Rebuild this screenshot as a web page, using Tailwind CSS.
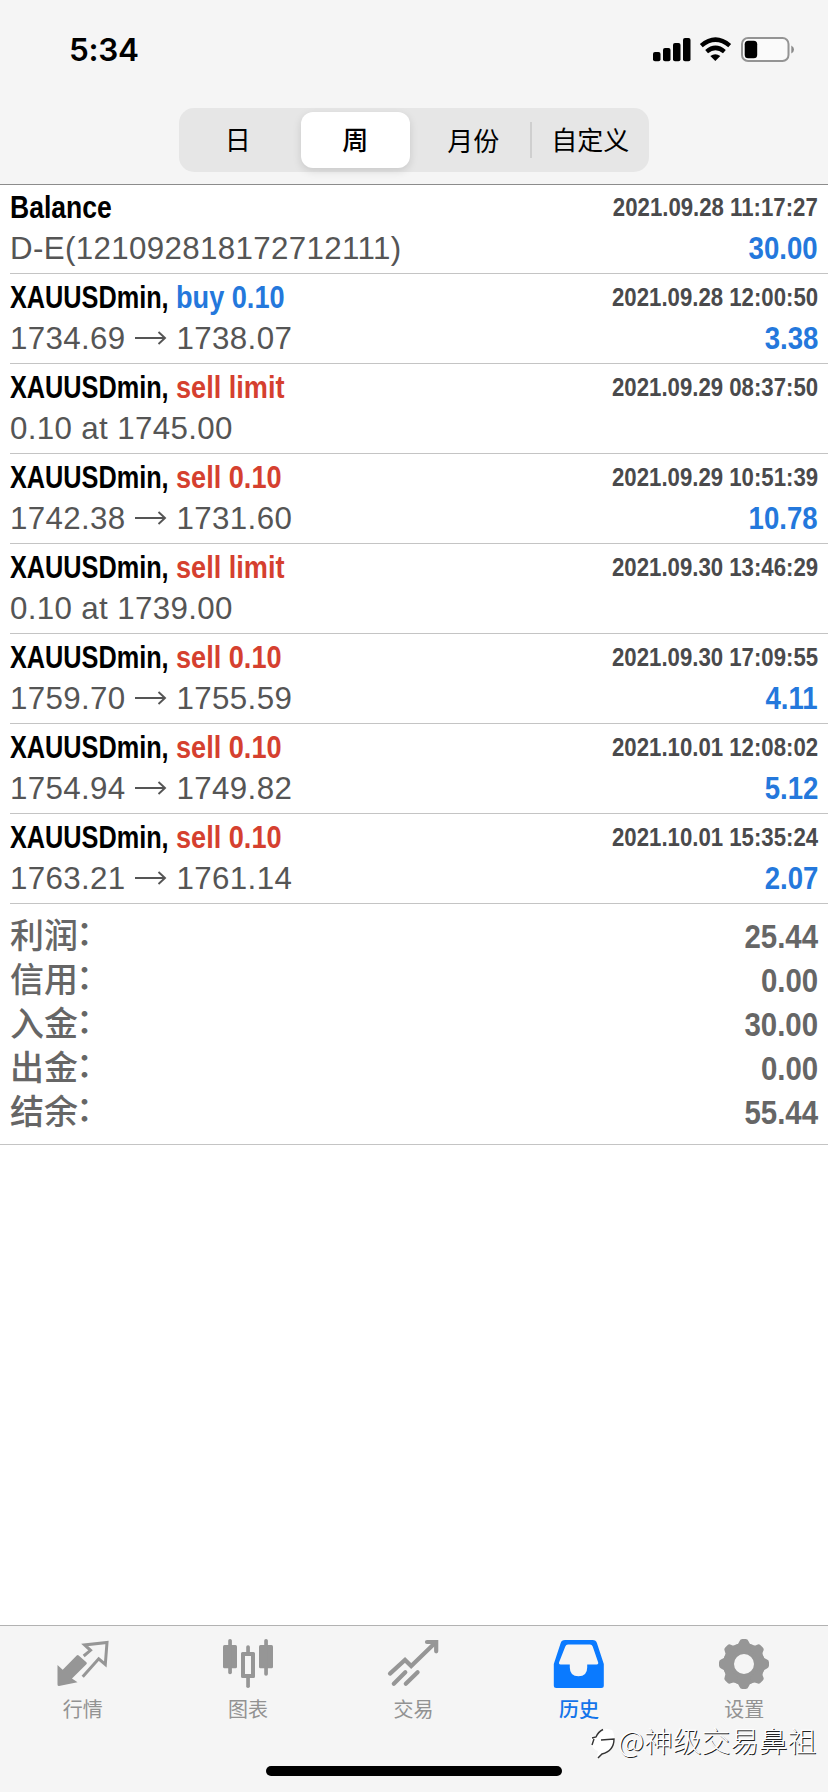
<!DOCTYPE html>
<html lang="zh-CN">
<head>
<meta charset="utf-8">
<title>历史</title>
<script src="https://cdn.jsdelivr.net/npm/@tailwindcss/browser@4"></script>
</head>
<body class="w-[828px] h-[1792px] overflow-hidden bg-white flex flex-col font-['Liberation_Sans','Noto_Sans_CJK_SC',sans-serif]">

<header class="h-[185px] shrink-0 bg-[#f5f5f5] border-b border-[#8c8c8c]">
  <div class="h-[108px] pl-[69px] pr-[34px] flex justify-between">
    <div class="mt-[30px] h-[40px] leading-[40px] text-[31.500px] tracking-[-0.300px] font-semibold font-['Inter',sans-serif] text-black">5:34</div>
    <svg class="mt-[34px]" width="142" height="32" viewBox="652 34 142 32">
      <g fill="#000">
        <rect x="653" y="52" width="7.5" height="9.3" rx="2"/>
        <rect x="663" y="48" width="7.5" height="13.3" rx="2"/>
        <rect x="673" y="43" width="7.5" height="18.3" rx="2"/>
        <rect x="683" y="38" width="7.5" height="23.3" rx="2"/>
        <path d="M715.3 61 l-5-5 q5-3.6 10 0z"/>
      </g>
      <g fill="none" stroke="#000" stroke-width="4.4">
        <path d="M701.3 45.6 Q715.5 33.6 729.700 45.600"/>
        <path d="M706.600 51.600 Q715.500 44.200 724.400 51.600"/>
      </g>
      <rect x="742" y="38" width="46.500" height="23" rx="6" fill="#fafafa" stroke="#949494" stroke-width="2"/>
      <rect x="744.700" y="40.800" width="12.500" height="17.400" rx="3.500" fill="#000"/>
      <path d="M791.300 45.500 q2.700 1.300 2.700 4 t-2.700 4z" fill="#8a8a8a"/>
    </svg>
  </div>
  <div class="mx-auto w-[470px] h-[64px] py-[4px] rounded-[15px] bg-[#e6e6e6] grid grid-cols-4 text-[26px] leading-[54px] text-center text-black font-['Noto_Sans_CJK_SC',sans-serif]">
    <div>日</div>
    <div class="mx-[4px] rounded-[12px] bg-white shadow-[0_3px_8px_rgba(0,0,0,0.13)] font-medium">周</div>
    <div class="flex items-center justify-between"><span class="flex-1 pl-[3px]">月份</span><i class="w-[2px] h-[36px] bg-[#cfcfcf]"></i></div>
    <div>自定义</div>
  </div>
</header>

<main class="flex-1">
  <div id="deals" class="pl-[10px]"></div>
  <div id="summary" class="h-[241px] pt-[10px] pl-[10px] pr-[10px] border-b border-[#c4c4c4] text-[#666]"></div>
</main>

<footer class="relative h-[167px] shrink-0 bg-[#f5f5f5] border-t border-[#b2b2b2]">
  <nav class="w-[827px] pt-[12px] grid grid-cols-5 text-center text-[20px] leading-[30px] text-[#929292] font-['Noto_Sans_CJK_SC',sans-serif]">
    <div class="flex flex-col items-center gap-[4px]">
      <svg width="52" height="52" viewBox="0 0 52 52"><path d="M.5 27l5.200 4.800 14-14.200q1-1 2 0l7.700 6.700q1 1 0 2L15 40.500l5.500 3.700L2 48q-1.500 0-1.500-1.500z" fill="#969696"/><path d="M26.700 18l6.800-5.700-5.900-5.400L50 4.400 48.300 26.500l-6.600-5.700-16 17.900" fill="none" stroke="#969696" stroke-width="3"/></svg>
      <span>行情</span>
    </div>
    <div class="flex flex-col items-center gap-[4px]">
      <svg width="52" height="52" viewBox="0 0 52 52" fill="#969696"><rect x="1" y="7" width="14" height="23.300" rx="1.500"/><rect x="6.200" y="1" width="3.700" height="35.300" rx="1.800"/><path fill-rule="evenodd" d="M20.500 14h11q1.500 0 1.500 1.500v23q0 1.500-1.500 1.500h-11q-1.500 0-1.500-1.500v-23q0-1.500 1.500-1.500zM23 18v18h6V18z"/><rect x="24.200" y="7.300" width="3.700" height="8" rx="1.800"/><rect x="24.200" y="38" width="3.700" height="12" rx="1.800"/><rect x="37" y="7" width="14" height="23.300" rx="1.500"/><rect x="42.200" y="1" width="3.700" height="36.700" rx="1.800"/></svg>
      <span>图表</span>
    </div>
    <div class="flex flex-col items-center gap-[4px]">
      <svg width="52" height="52" viewBox="0 0 52 52" fill="none" stroke="#969696" stroke-width="4.200" stroke-linecap="round"><path d="M3 35.600L18 21.900l6.200 6.200L48.500 4.600"/><path d="M40 4h9.200v9.300"/><path d="M6.800 45.700l11.500-11.500M18.800 45.700l11.800-11.500"/></svg>
      <span>交易</span>
    </div>
    <div class="flex flex-col items-center gap-[4px] text-[#1374ea] font-medium">
      <svg width="52" height="52" viewBox="0 0 52 52" fill="#0a7aff"><path fill-rule="evenodd" d="M12 2h27.500q3.500 0 4.500 3.200l6.800 20.800v21.500q0 2.500-2.500 2.500h-45Q.8 50 .8 47.500V26L7.600 5.200Q8.500 2 12 2zM15 6.500q-2 0-2.700 2L6 24.500q-.5 2 1.500 2h9.300v3q0 8.700 8.700 8.700t8.700-8.700v-3h9.500q2 0 1.500-2L39.700 8.500q-.7-2-2.700-2z"/></svg>
      <span>历史</span>
    </div>
    <div class="flex flex-col items-center gap-[4px]">
      <svg width="52" height="52" viewBox="0 0 52 52" fill="#969696"><circle cx="26" cy="26" r="15.500" fill="none" stroke="#969696" stroke-width="11"/><g id="t"><path d="M18 7q2.500-.5 3.600-4 .7-2 2.800-2h3.200q2.100 0 2.800 2 1.100 3.500 3.600 4l-3 5h-10z"/><path d="M18 7q2.500-.5 3.600-4 .7-2 2.800-2h3.200q2.100 0 2.800 2 1.100 3.500 3.600 4l-3 5h-10z" transform="rotate(90 26 26)"/><path d="M18 7q2.500-.5 3.600-4 .7-2 2.800-2h3.200q2.100 0 2.800 2 1.100 3.500 3.600 4l-3 5h-10z" transform="rotate(180 26 26)"/><path d="M18 7q2.500-.5 3.600-4 .7-2 2.800-2h3.200q2.100 0 2.800 2 1.100 3.500 3.600 4l-3 5h-10z" transform="rotate(270 26 26)"/></g><use href="#t" transform="rotate(45 26 26)"/></svg>
      <span>设置</span>
    </div>
  </nav>
  <div class="absolute left-[266px] top-[140px] w-[296px] h-[10px] rounded-full bg-black"></div>
  <div class="absolute left-[589px] top-[93px] flex items-center whitespace-nowrap text-[28.700px] leading-[40px] text-white font-light font-['Noto_Sans_CJK_SC',sans-serif] [text-shadow:1px_1px_0.500px_#222]">
    <svg class="mt-[7px]" width="29" height="34" viewBox="0 0 29 34" fill="none"><path d="M2 11l5-1q3-7 11-7l5 1q3 5 2 10-2 10-10 12l-3 3-4 2 1-6q-6-2-7-8z" fill="#fff"/><path d="M3 12l4-1q2-5 7-7.500M3 19l2-6M12 14l13-1q0 12-12 15l-4 4" stroke="#333" stroke-width="1.400"/></svg>
    <span>@神级交易鼻祖</span>
  </div>
</footer>

<script>
const blue = 'text-[#2478dc]', red = 'text-[#d5402f]';
const deals = [
  ['Balance', '', '', '2021.09.28 11:17:27', 'D-E(121092818172712111)', '30.00'],
  ['XAUUSDmin,', 'buy 0.10', blue, '2021.09.28 12:00:50', '1734.69>1738.07', '3.38'],
  ['XAUUSDmin,', 'sell limit', red, '2021.09.29 08:37:50', '0.10 at 1745.00', ''],
  ['XAUUSDmin,', 'sell 0.10', red, '2021.09.29 10:51:39', '1742.38>1731.60', '10.78'],
  ['XAUUSDmin,', 'sell limit', red, '2021.09.30 13:46:29', '0.10 at 1739.00', ''],
  ['XAUUSDmin,', 'sell 0.10', red, '2021.09.30 17:09:55', '1759.70>1755.59', '4.11'],
  ['XAUUSDmin,', 'sell 0.10', red, '2021.10.01 12:08:02', '1754.94>1749.82', '5.12'],
  ['XAUUSDmin,', 'sell 0.10', red, '2021.10.01 15:35:24', '1763.21>1761.14', '2.07'],
];
const arrow = '<svg class="mx-[8.500px]" width="34" height="20" viewBox="0 0 34 20" fill="none" stroke="#555" stroke-width="1.900"><path d="M1 9h30M24.500 3l6.500 6-6.500 6"/></svg>';
document.getElementById('deals').innerHTML = deals.map(([name, op, color, time, detail, profit]) => `
  <div class="h-[90px] first:h-[89px] pt-[2px] first:pt-[1px] pr-[10px] border-b border-[#c4c4c4] flex flex-col">
    <div class="flex justify-between h-[44px] text-[31px] leading-[44px] font-bold whitespace-nowrap">
      <div class="flex text-black">
        <span class="w-[166px] shrink-0"><span class="inline-block origin-left ${op ? 'scale-x-[0.815]' : 'scale-x-[0.855]'}">${name}</span></span>
        <span class="inline-block origin-left scale-x-[0.875] ${color}">${op}</span>
      </div>
      <span class="inline-block origin-right scale-x-[0.888] -mt-[1px] text-[25px] text-[#4a4a4c]">${time}</span>
    </div>
    <div class="flex justify-between h-[40px] -mt-[1px] leading-[40px] whitespace-nowrap">
      <div class="flex items-center text-[31.300px] tracking-[0.350px] text-[#555]">${detail.split('>').map(s => `<span>${s}</span>`).join(arrow)}</div>
      <span class="inline-block origin-right scale-x-[0.890] text-[31px] font-bold ${blue}">${profit}</span>
    </div>
  </div>`).join('');
document.getElementById('summary').innerHTML = [['利润', '25.44'], ['信用', '0.00'], ['入金', '30.00'], ['出金', '0.00'], ['结余', '55.44']].map(([k, v]) => `
  <div class="flex justify-between h-[44px]">
    <span class="flex h-[40px] text-[34px] leading-[40px] font-medium font-['Noto_Sans_CJK_SC',sans-serif]">${k}<span class="-ml-[2px] -mt-[3px]">：</span></span>
    <span class="inline-block h-[44px] leading-[44px] origin-right scale-x-[0.865] text-[34px] font-bold">${v}</span>
  </div>`).join('');
</script>
</body>
</html>
